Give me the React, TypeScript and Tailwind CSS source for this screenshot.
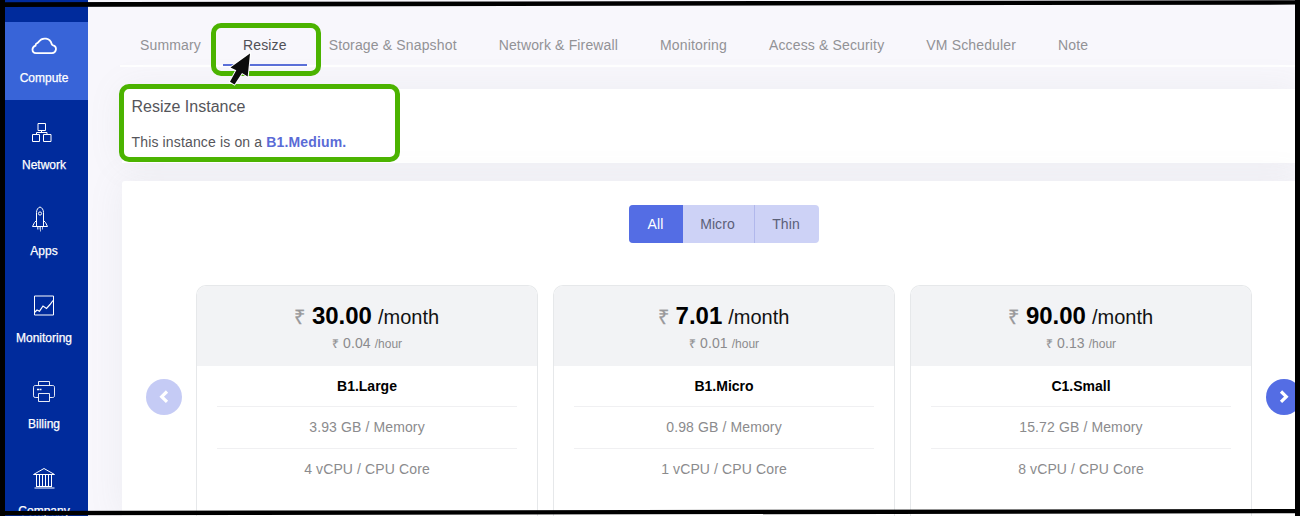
import React from "react";

const tabs = [
  "Summary",
  "Resize",
  "Storage & Snapshot",
  "Network & Firewall",
  "Monitoring",
  "Access & Security",
  "VM Scheduler",
  "Note",
];

const plans = [
  { month: "30.00", hour: "0.04", name: "B1.Large", memory: "3.93", cpu: "4" },
  { month: "7.01", hour: "0.01", name: "B1.Micro", memory: "0.98", cpu: "1" },
  { month: "90.00", hour: "0.13", name: "C1.Small", memory: "15.72", cpu: "8" },
];

function Svg({ children }: { children: React.ReactNode }) {
  return (
    <svg width="28" height="28" viewBox="0 0 28 28" fill="none" stroke="currentColor" strokeWidth="1">
      {children}
    </svg>
  );
}

const items = [
  {
    label: "Compute",
    nudge: "",
    icon: (
      <Svg>
        <path
          strokeWidth="1.8"
          d="M6 21.100h16a4 4 0 0 0 1.200-7.800c-.8-.3-1.200-.5-1.500-1.200A7.200 7.200 0 0 0 8.900 9.500c-.4.8-.9 1.200-1.700 1.700-1.200.4-1.700 1.300-1.700 2.500-2 .8-3 2-3 3.900 0 2 1.500 3.500 3.500 3.500z"
        />
      </Svg>
    ),
  },
  {
    label: "Network",
    nudge: "-ml-[5px]",
    icon: (
      <Svg>
        <path d="M10 4.500h7.500v7H10zM4.500 15.500h7v7h-7zM15.500 15.500h7.500v7h-7.500zM13.500 11.500v2M8.500 15.500v-2h10.500v2" />
      </Svg>
    ),
  },
  {
    label: "Apps",
    nudge: "-ml-[7px]",
    icon: (
      <Svg>
        <g transform="translate(0 -1)">
          <path d="M9.500 22.500V8.500c0-2.700 1.500-5 3.500-5.500 2 .5 3.500 2.800 3.500 5.500v14" />
          <path d="M9.500 16.500 7.500 18.500 5.500 22.500h15l-2-4-2-2" />
          <circle cx="13" cy="9.500" r="1.600" />
          <path opacity="0.7" d="M10.500 23v2.500M12 23v2.500M13.500 23v4.500M15.500 23v2.500" />
        </g>
      </Svg>
    ),
  },
  {
    label: "Monitoring",
    nudge: "",
    icon: (
      <Svg>
        <g transform="translate(0 -0.500)">
          <path d="M4.500 4.500h19v19h-19z" />
          <path strokeWidth="1.200" d="M4.500 21l2.500-2.500 2.500 1.200 3.500-5.200 3.500 2.500 3.500-4 3-4" />
        </g>
      </Svg>
    ),
  },
  {
    label: "Billing",
    nudge: "",
    icon: (
      <Svg>
        <path
          opacity="0.9"
          d="M8.500 7.500v-4h11v4M8.500 19.500H5.200a1.700 1.700 0 0 1-1.700-1.700V9.200c0-1 .7-1.700 1.700-1.700h17.600c1 0 1.700.7 1.700 1.700v8.600c0 1-.7 1.700-1.700 1.700h-3.300M8.500 15.500h11v8h-11z"
        />
        <path strokeWidth="1.500" d="M7 11.500h2M9.500 11.500h2" />
      </Svg>
    ),
  },
  {
    label: "Company",
    nudge: "",
    icon: (
      <Svg>
        <path d="M3.500 9.500 14 3.500l10.500 6zM4.500 23h20M6 21.500h16M6.500 10v11M9.500 10v11M12.500 10v11M15.500 10v11M18.500 10v11M21.500 10v11" />
      </Svg>
    ),
  },
];

function Sidebar() {
  return (
    <nav className="relative z-10 ml-[5px] flex w-[83px] shrink-0 flex-col gap-[8.500px] bg-[#002b9c] pt-[22px] text-[12px] text-white">
      {items.map((it, i) => (
        <div
          key={it.label}
          className={
            i === 0
              ? "flex h-[78px] shrink-0 flex-col items-center bg-[#3864d8] pt-[10px] pr-[5px]"
              : "flex h-[78px] shrink-0 flex-col items-center pt-[10px] pr-[5px]"
          }
        >
          <span className={it.nudge}>{it.icon}</span>
          <span className="mt-[10px] leading-[16px] [-webkit-text-stroke:0.25px_white]">{it.label}</span>
        </div>
      ))}
    </nav>
  );
}

function Chevron({ left }: { left?: boolean }) {
  return (
    <svg width="12" height="14" viewBox="0 0 12 14" fill="none" stroke="white" strokeWidth="3.200">
      <path d={left ? "M9 1.500 3.700 6.700l5.300 5.200" : "M3 1.500l5.300 5.200L3 11.900"} />
    </svg>
  );
}

function PlanCard({ plan }: { plan: (typeof plans)[number] }) {
  return (
    <article className="w-[342px] shrink-0 overflow-hidden rounded-t-[10px] border border-b-0 border-[#e6e8ea] text-center tracking-[0.120px] text-[#8b8b8d]">
      <header className="h-[80px] bg-[#f2f3f5] pt-[15px]">
        <div className="flex h-[30px] items-baseline justify-center leading-[30px] tracking-normal">
          <span className="mr-[7px] text-[20px] text-[#98989a] [-webkit-text-stroke:0.3px_#a0a0a2]">₹</span>
          <span className="mr-[6px] text-[24px] font-bold text-black">{plan.month}</span>
          <span className="pr-px text-[20px] text-[#111]">/month</span>
        </div>
        <div className="flex h-[20px] items-baseline justify-center gap-1 text-[14px] leading-[24px]">
          <span className="text-[12px] [-webkit-text-stroke:0.2px_#98989a]">₹</span>
          <span>{plan.hour}</span>
          <span className="text-[12px] tracking-normal">/hour</span>
        </div>
      </header>
      <div className="px-5 text-[14px]">
        <div className="h-[41px] border-b border-[#f0f0f2] leading-[40px] font-bold tracking-normal text-black">
          {plan.name}
        </div>
        <div className="h-[42px] border-b border-[#f0f0f2] leading-[41px]">{plan.memory} GB / Memory</div>
        <div className="h-[42px] leading-[41px]">{plan.cpu} vCPU / CPU Core</div>
      </div>
    </article>
  );
}

export default function App() {
  return (
    <div className="relative flex h-[516px] w-[1300px] overflow-hidden bg-[#f8f7fc] font-['Liberation_Sans',Arial,sans-serif]">
      <Sidebar />
      <main className="flex min-w-0 flex-1 flex-col pt-[24px] pl-[32px]">
        <div className="flex h-[43px] shrink-0 gap-[2px] border-b-2 border-white text-[14px] tracking-[0.150px] text-[#929296]">
          {tabs.map((t) => (
            <div
              key={t}
              className={
                t === "Resize"
                  ? "h-[42px] border-b-2 border-[#5a6fd8] px-5 leading-[42px] whitespace-nowrap text-[#505056]"
                  : "h-[42px] px-5 leading-[42px] whitespace-nowrap"
              }
            >
              {t}
            </div>
          ))}
        </div>

        <section className="mt-[22px] ml-[2px] h-[74px] shrink-0 bg-white pl-[9.500px] text-[#55555a] shadow-[0_0_35px_rgba(140,145,145,0.10)]">
          <h1 className="pt-[8px] text-[16px] leading-[20px]">Resize Instance</h1>
          <p className="mt-[15px] text-[14px] leading-[20px] tracking-[0.150px]">
            This instance is on a <b className="text-[#5a6bd6]">B1.Medium.</b>
          </p>
        </section>

        <section className="mt-[18px] ml-[2px] flex min-h-0 flex-1 flex-col rounded-tl-[3px] bg-white pt-[24px] shadow-[0_0_35px_rgba(140,145,145,0.10)]">
          <div className="ml-[507px] flex h-[38px] w-[190px] shrink-0 overflow-hidden rounded-[4px] bg-[#cdd2f6] text-center text-[14px] leading-[38px] tracking-[0.100px] text-[#5b6078]">
            <button className="w-[54px] bg-[#546de4] pr-px text-white">All</button>
            <button className="w-[71px] pr-[2px]">Micro</button>
            <button className="w-[65px] border-l border-[#b1b8ec] pr-[2px]">Thin</button>
          </div>
          <div className="mt-[42px] flex min-h-0 flex-1 pl-[24px]">
            <button className="mt-[94px] mr-[14px] flex h-9 w-9 shrink-0 items-center justify-center rounded-full bg-[#c5cbf5]">
              <Chevron left />
            </button>
            <div className="flex shrink-0 gap-[15px]">
              {plans.map((p) => (
                <PlanCard key={p.name} plan={p} />
              ))}
            </div>
            <button className="mt-[94px] ml-[14px] flex h-9 w-9 shrink-0 items-center justify-center rounded-full bg-[#546de4]">
              <Chevron />
            </button>
          </div>
        </section>
      </main>

      <div className="absolute top-[23px] left-[211px] z-20 h-[53px] w-[110px] rounded-[10px] border-[5px] border-[#4bb300]" />
      <div className="absolute top-[84px] left-[119px] z-20 h-[78px] w-[281px] rounded-[10px] border-[5px] border-[#4bb300]" />
      <svg className="absolute top-0 left-0 z-30" width="1300" height="516" viewBox="0 0 1300 516">
        <path
          d="M250 53.500 230.500 67.500l5.800 2.800-6.300 11.500 4.500 2.700 7.500-11.500 5.700 3.500z"
          fill="#0c0c0c"
          stroke="white"
          strokeWidth="2"
          paintOrder="stroke"
        />
        <path d="M0 0h5v516H0zM1295 0h5v516h-5z" fill="#000" />
        <path d="M0 2.200 1300 .2v4.400L0 6.900zM0 511l1300-2v4.300L0 515.300z" fill="#000" />
      </svg>
    </div>
  );
}
